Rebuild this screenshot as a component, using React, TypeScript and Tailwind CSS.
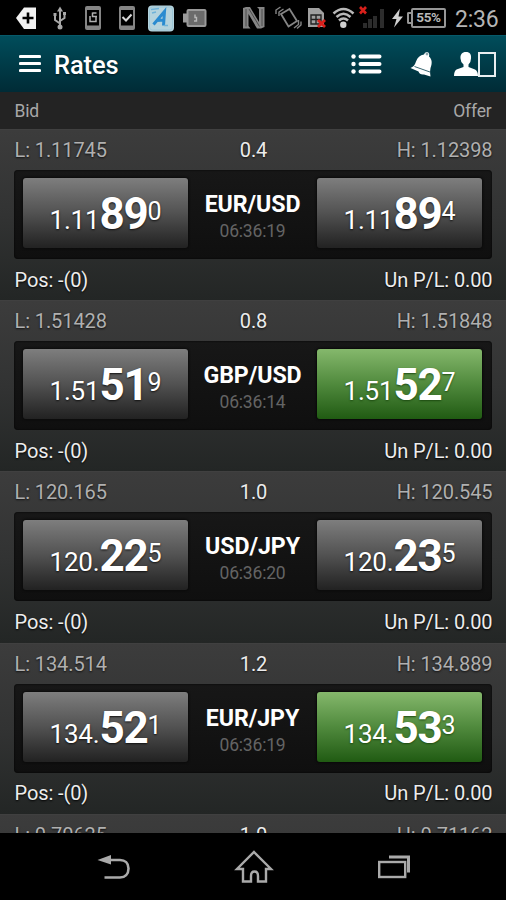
import type { ReactNode } from "react";

type Quote = { lead: string; pips: string; frac: string; up?: boolean };

type Rate = {
	pair: string;
	time: string;
	low: string;
	high: string;
	spread: string;
	bid: Quote;
	offer: Quote;
};

const RATES: Rate[] = [
	{
		pair: "EUR/USD",
		time: "06:36:19",
		low: "1.11745",
		high: "1.12398",
		spread: "0.4",
		bid: { lead: "1.11", pips: "89", frac: "0" },
		offer: { lead: "1.11", pips: "89", frac: "4" },
	},
	{
		pair: "GBP/USD",
		time: "06:36:14",
		low: "1.51428",
		high: "1.51848",
		spread: "0.8",
		bid: { lead: "1.51", pips: "51", frac: "9" },
		offer: { lead: "1.51", pips: "52", frac: "7", up: true },
	},
	{
		pair: "USD/JPY",
		time: "06:36:20",
		low: "120.165",
		high: "120.545",
		spread: "1.0",
		bid: { lead: "120.", pips: "22", frac: "5" },
		offer: { lead: "120.", pips: "23", frac: "5" },
	},
	{
		pair: "EUR/JPY",
		time: "06:36:19",
		low: "134.514",
		high: "134.889",
		spread: "1.2",
		bid: { lead: "134.", pips: "52", frac: "1" },
		offer: { lead: "134.", pips: "53", frac: "3", up: true },
	},
];

function StatusBar() {
	return (
		<div className="flex h-[35px] shrink-0 items-center bg-black">
			<svg className="shrink-0" width="392" height="35" viewBox="0 0 392 35" fill="none">
				{/* back tag with plus */}
				<path d="M16 18 24 7.500H36V29H24Z" fill="#f2f2f2" />
				<path d="M28 12.500V23.500M22.500 18H33.500" stroke="#000" strokeWidth="2.600" />
				{/* usb */}
				<g stroke="#a8a8a8" strokeWidth="2">
					<path d="M60 10V27M60 23.500L55 20V14M60 21L64.500 18V13" />
					<path d="M57 11.500 60 6.500 63 11.500Z" fill="#a8a8a8" stroke="none" />
					<circle cx="60" cy="27" r="2.500" fill="#a8a8a8" stroke="none" />
					<path d="M53.500 14.500H56.500M63 13.500H66" strokeWidth="3" />
				</g>
				{/* phones */}
				<g stroke="#858585" strokeWidth="2">
					<rect x="86" y="7" width="14" height="22" rx="1" />
					<path d="M86 8.500H100M86 27H100" strokeWidth="3.200" />
					<path d="M92.500 12.500V17M92.500 13H96.500M92 16.500H97M90 16V21.500H96V17" stroke="#b0b0b0" strokeWidth="1.500" />
					<rect x="120" y="7" width="14" height="22" rx="1" />
					<path d="M120 8.500H134M120 27H134" strokeWidth="3.200" />
					<path d="M122.500 17 126 20.500 131.500 14.500" stroke="#d8d8d8" />
				</g>
				{/* app badge */}
				<rect x="148" y="5.500" width="26" height="26" rx="4" fill="#b5d3dd" />
				<rect x="149.500" y="7" width="23" height="23" rx="3" stroke="#9dc6d6" />
				<path d="M153.500 24.500 164.500 11.500 163.500 25.500M156.500 20.500 164.500 20" stroke="#2a8bd0" strokeWidth="3" />
				<path d="M151 9.500 159 8.500M152 13 156 12M164 25.500H168" stroke="#6fb2d8" strokeWidth="1.500" />
				{/* battery */}
				<rect x="187.500" y="10" width="18" height="16" rx="1" fill="#6b6b6b" stroke="#9a9a9a" strokeWidth="2" />
				<path d="M185 13.500V22.500" stroke="#9a9a9a" strokeWidth="4" />
				<path d="M195 14.500V17.500H196.500V21H194" stroke="#b8b8b8" strokeWidth="1.400" />
				{/* nfc */}
				<path d="M243 8 246 7H250L259 22V9L257 7H264.500V27L261 28.500H257L248.500 14V26L250.500 28.500H243Z" fill="#858585" />
				<path d="M246 9V26.500M249 9 259.500 26.500M262 9V26" stroke="#4c4c4c" strokeWidth="1" />
				{/* vibrating phone */}
				<g stroke="#858585" strokeWidth="1.800">
					<path d="M281 14 289.500 9 297 21 288.500 26.500Z" />
					<path d="M276 14V10L280.500 7M279 16V12L283.500 9M294 28 298.500 24.500V20M297 28.500 301 25V21.500" strokeWidth="1.400" />
				</g>
				{/* sim card */}
				<path d="M308 8H319L324 13V27H308Z" fill="#a0a0a0" />
				<path d="M311 15H321V24H311ZM311 19.500H321M316 15V24" stroke="#222" strokeWidth="1.400" />
				<path d="M318 20 325 27M325 20 318 27" stroke="#d8201b" strokeWidth="2.800" />
				{/* wifi */}
				<g stroke="#b8b8b8" strokeWidth="2.600">
					<path d="M333.500 13.500Q343.500 4.500 353.500 13.500" />
					<path d="M336.500 17Q343.500 10.500 350.500 17" />
					<path d="M339 20.500Q343.500 16.500 348 20.500" />
					<circle cx="343.300" cy="24.800" r="3.200" fill="#d0d0d0" stroke="none" />
				</g>
				{/* signal */}
				<path d="M365 23V28M370 19V28M375 16V28M382 9V28" stroke="#2c2c2c" strokeWidth="4" />
				<path d="M360 7 366 13.500M366 7 360 13.500" stroke="#d8201b" strokeWidth="2.600" />
			</svg>
			<svg className="shrink-0" width="12" height="35" viewBox="0 0 12 35">
				<path d="M8 8.500 0 19H4.500L2 27.500 11 16.500H6.500Z" fill="#d0d0d0" />
			</svg>
			<div className="ml-[3px] flex h-[20px] w-[39px] shrink-0 items-center">
				<div className="h-[12px] w-[4px] shrink-0 rounded-l-[2px] border-2 border-r-0 border-[#969696]" />
				<div className="flex h-[20px] w-[35px] shrink-0 items-center justify-center rounded-[2px] border-2 border-[#969696] text-[13.500px] font-bold leading-none tracking-[-0.4px] text-[#b8b8b8]">
					55%
				</div>
			</div>
			<span className="ml-[9px] pt-[3px] text-[23px] leading-none tracking-[-0.2px] text-[#b5b5b5]">2:36</span>
		</div>
	);
}

function Header() {
	return (
		<header className="flex h-[57px] shrink-0 items-center border-t border-[#065a6a] bg-linear-to-b from-[#004d5b] to-[#002b36] pl-[19px] pr-[10px]">
			<svg width="22" height="20" viewBox="0 0 22 20">
				<path d="M1.500 2.500H20.500M1.500 9.500H20.500M1.500 16.500H20.500" stroke="#fff" strokeWidth="3.200" strokeLinecap="round" />
			</svg>
			<h1 className="ml-[13px] pt-[4px] text-[25.500px] font-medium leading-none tracking-[-0.1px] text-white [text-shadow:0_1px_2px_#001a20]">
				Rates
			</h1>
			<svg className="-mt-px ml-auto" width="32" height="22" viewBox="0 0 32 22" fill="#fff">
				<circle cx="2.500" cy="3.500" r="2.200" />
				<circle cx="2.500" cy="11" r="2.200" />
				<circle cx="2.500" cy="18.500" r="2.200" />
				<path d="M9.500 3.500H28.500M9.500 11H28.500M9.500 18.500H28.500" stroke="#fff" strokeWidth="4" strokeLinecap="round" />
			</svg>
			<svg className="-mt-px ml-[27px]" width="24" height="28" viewBox="0 0 24 28" fill="#fff">
				<path d="M.5 18Q4.500 16.500 6 11.500C7.500 7.500 10 5 14 4.500Q14.500 2 17 2Q20 2.500 19 6.500C22 9 22.500 13 20.500 18Q19.500 22 20.500 26.500L14 24.500Q9.500 25 8.500 21.500Z" />
				<path d="M4.500 16.500 20.500 22.200" stroke="#3b6772" strokeWidth="1" />
				<circle cx="17" cy="4" r="1.400" fill="#8ba5ab" />
			</svg>
			<svg className="ml-[19px]" width="25" height="26" viewBox="0 0 25 26" fill="#fff">
				<path d="M13 1C17 1 18.500 3.500 18 7.500Q18 11 15.500 13.500V16L22 18.500Q25 20 25 25H1Q1 20 3.500 18.500L10.500 16V13.500Q7.500 11 7.500 7.500C7.200 3.500 9 1 13 1Z" />
			</svg>
			<div className="h-[25px] w-[18px] border-2 border-[#e8eef0]" />
		</header>
	);
}

function PriceButton({ quote }: { quote: Quote }) {
	return (
		<button
			className={
				quote.up
					? "flex h-[70px] w-[165px] items-baseline justify-center rounded-[3px] bg-linear-to-b from-[#85b86c] via-[#508a3d] to-[#205b12] pt-[10px] leading-[52px] text-white [text-shadow:0_1px_2px_#1c4a10] shadow-[0_0_2px_1px_#090909]"
					: "flex h-[70px] w-[165px] items-baseline justify-center rounded-[3px] bg-linear-to-b from-[#7e7e7e] via-[#525252] to-[#222] pt-[10px] leading-[52px] text-white [text-shadow:0_1px_2px_#111] shadow-[0_0_2px_1px_#0b0b0b]"
			}
		>
			<span className="text-[26px] tracking-[-0.2px]">{quote.lead}</span>
			<span className="text-[44px] font-bold tracking-[-1.200px]">{quote.pips}</span>
			<span className="relative -top-[9px] text-[25px]">{quote.frac}</span>
		</button>
	);
}

function Levels({ low, spread, high }: { low: string; spread: string; high: string }) {
	return (
		<div className="grid h-[40px] grid-cols-3 items-center pl-[14.500px] pr-[13.500px] text-[20px] tracking-[-0.1px] text-[#b0b0b0] [text-shadow:0_1px_2px_#111]">
			<span>L: {low}</span>
			<span className="text-center text-[#ececec]">{spread}</span>
			<span className="text-right">H: {high}</span>
		</div>
	);
}

function RowShell({ children }: { children: ReactNode }) {
	return (
		<section className="h-[171.200px] shrink-0 border-t border-[#404040] bg-linear-to-b from-[#3c3c3c] via-[#323333] to-[#232625]">
			{children}
		</section>
	);
}

function RateRow({ rate }: { rate: Rate }) {
	return (
		<RowShell>
			<Levels low={rate.low} spread={rate.spread} high={rate.high} />
			<div className="mx-[14px] flex h-[89px] justify-between rounded-[4px] bg-linear-to-b from-[#171717] to-[#0f0f0f] pl-[9px] pr-[10px] pt-[8px] shadow-[inset_0_0_2px_#000]">
				<PriceButton quote={rate.bid} />
				<div className="flex flex-1 flex-col items-center whitespace-nowrap pt-[13px]">
					<span className="text-[23.200px] font-bold leading-[27px] tracking-[-0.1px] text-white">{rate.pair}</span>
					<span className="text-[17.500px] leading-[26px] tracking-[-0.2px] text-[#646464]">{rate.time}</span>
				</div>
				<PriceButton quote={rate.offer} />
			</div>
			<div className="flex h-[40px] items-center justify-between pl-[14.500px] pr-[13.500px] pt-px text-[20px] tracking-[-0.1px] text-[#ededed] [text-shadow:0_1px_2px_#000]">
				<span>Pos: -(0)</span>
				<span>Un P/L: 0.00</span>
			</div>
		</RowShell>
	);
}

function NavBar() {
	return (
		<nav className="flex h-[67px] shrink-0 items-center justify-between bg-black pl-[96px] pr-[94px] pt-px">
			<svg className="mt-[4px]" width="36" height="30" viewBox="0 0 36 30" fill="none">
				<path d="M13 6H24C29 6 32.500 9 32.500 14.500C32.500 20 29 23.500 24 23.500H8.500" stroke="#aaa" strokeWidth="2.600" />
				<path d="M1.500 6 15 1V10.500Z" fill="#aaa" />
			</svg>
			<svg className="-ml-[3px]" width="40" height="36" viewBox="0 0 40 36" fill="none">
				<path d="M20 3 37 20H32V32.500H24V27Q24 22.500 20.500 22.500Q17 22.500 17 27V32.500H9V20H3Z" stroke="#aaa" strokeWidth="2.400" />
			</svg>
			<svg width="34" height="26" viewBox="0 0 34 26" fill="none">
				<rect x="1.200" y="8" width="26" height="15" stroke="#aaa" strokeWidth="2.400" />
				<path d="M11 3H30.500V18.500" stroke="#aaa" strokeWidth="3" />
			</svg>
		</nav>
	);
}

export default function App() {
	return (
		<div className="flex h-[900px] w-[506px] flex-col overflow-hidden bg-black font-[Roboto,sans-serif]">
			<StatusBar />
			<Header />
			<div className="flex h-[37px] shrink-0 items-center justify-between bg-[#232323] px-[14.500px] pt-px text-[17.500px] tracking-[-0.2px] text-[#a8a8a8]">
				<span>Bid</span>
				<span>Offer</span>
			</div>
			<main className="flex min-h-0 flex-1 flex-col overflow-hidden">
				{RATES.map((rate) => (
					<RateRow key={rate.pair} rate={rate} />
				))}
				<RowShell>
					<Levels low="0.70625" spread="1.0" high="0.71162" />
				</RowShell>
			</main>
			<NavBar />
		</div>
	);
}
